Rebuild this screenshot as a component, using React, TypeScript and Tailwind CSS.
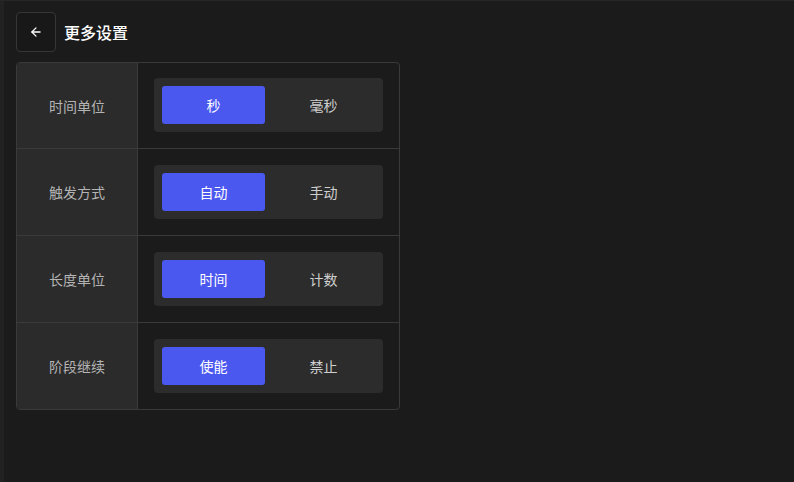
import { ArrowLeft } from "lucide-react";

type Setting = {
  label: string;
  options: [string, string];
  active: number;
};

const settings: Setting[] = [
  { label: "时间单位", options: ["秒", "毫秒"], active: 0 },
  { label: "触发方式", options: ["自动", "手动"], active: 0 },
  { label: "长度单位", options: ["时间", "计数"], active: 0 },
  { label: "阶段继续", options: ["使能", "禁止"], active: 0 },
];

function Segmented({ options, active }: { options: [string, string]; active: number }) {
  return (
    <div className="grid h-[54px] w-[229px] grid-cols-2 gap-[7px] rounded bg-[#2c2c2c] p-2">
      {options.map((opt, i) => (
        <button
          key={opt}
          type="button"
          className={
            i === active
              ? "rounded-[3px] bg-[#4b58ef] text-sm text-white"
              : "rounded-[3px] text-sm text-[#cfcfcf]"
          }
        >
          {opt}
        </button>
      ))}
    </div>
  );
}

export default function App() {
  return (
    <div
      className="flex h-[482px] w-[794px] border-t border-[#262626] bg-[#1b1b1b]"
      style={{ fontFamily: '"Noto Sans CJK SC", "Noto Sans", sans-serif' }}
    >
      <div className="w-1 bg-[#222222]" />
      <div className="flex flex-col pl-3 pt-[11px]">
        <div className="flex items-center gap-2">
          <button
            type="button"
            className="flex h-10 w-10 items-center justify-center rounded border border-[#363636] bg-[#181818] text-white"
          >
            <ArrowLeft size={14} strokeWidth={2.2} />
          </button>
          <h1 className="-mt-px text-base font-medium text-white">更多设置</h1>
        </div>
        <div className="mt-[10px] w-[384px] overflow-hidden rounded border border-[#3a3a3a]">
          {settings.map((s, i) => (
            <div
              key={s.label}
              className={`flex ${i > 0 ? "border-t border-[#3a3a3a]" : ""}`}
            >
              <div className="flex w-[121px] items-center justify-center border-r border-[#3a3a3a] bg-[#2b2b2b] text-sm text-[#b4b4b4]">
                {s.label}
              </div>
              <div className={`flex-1 px-4 pb-4 ${i === 0 ? "pt-[15px]" : "pt-4"}`}>
                <Segmented options={s.options} active={s.active} />
              </div>
            </div>
          ))}
        </div>
      </div>
    </div>
  );
}
